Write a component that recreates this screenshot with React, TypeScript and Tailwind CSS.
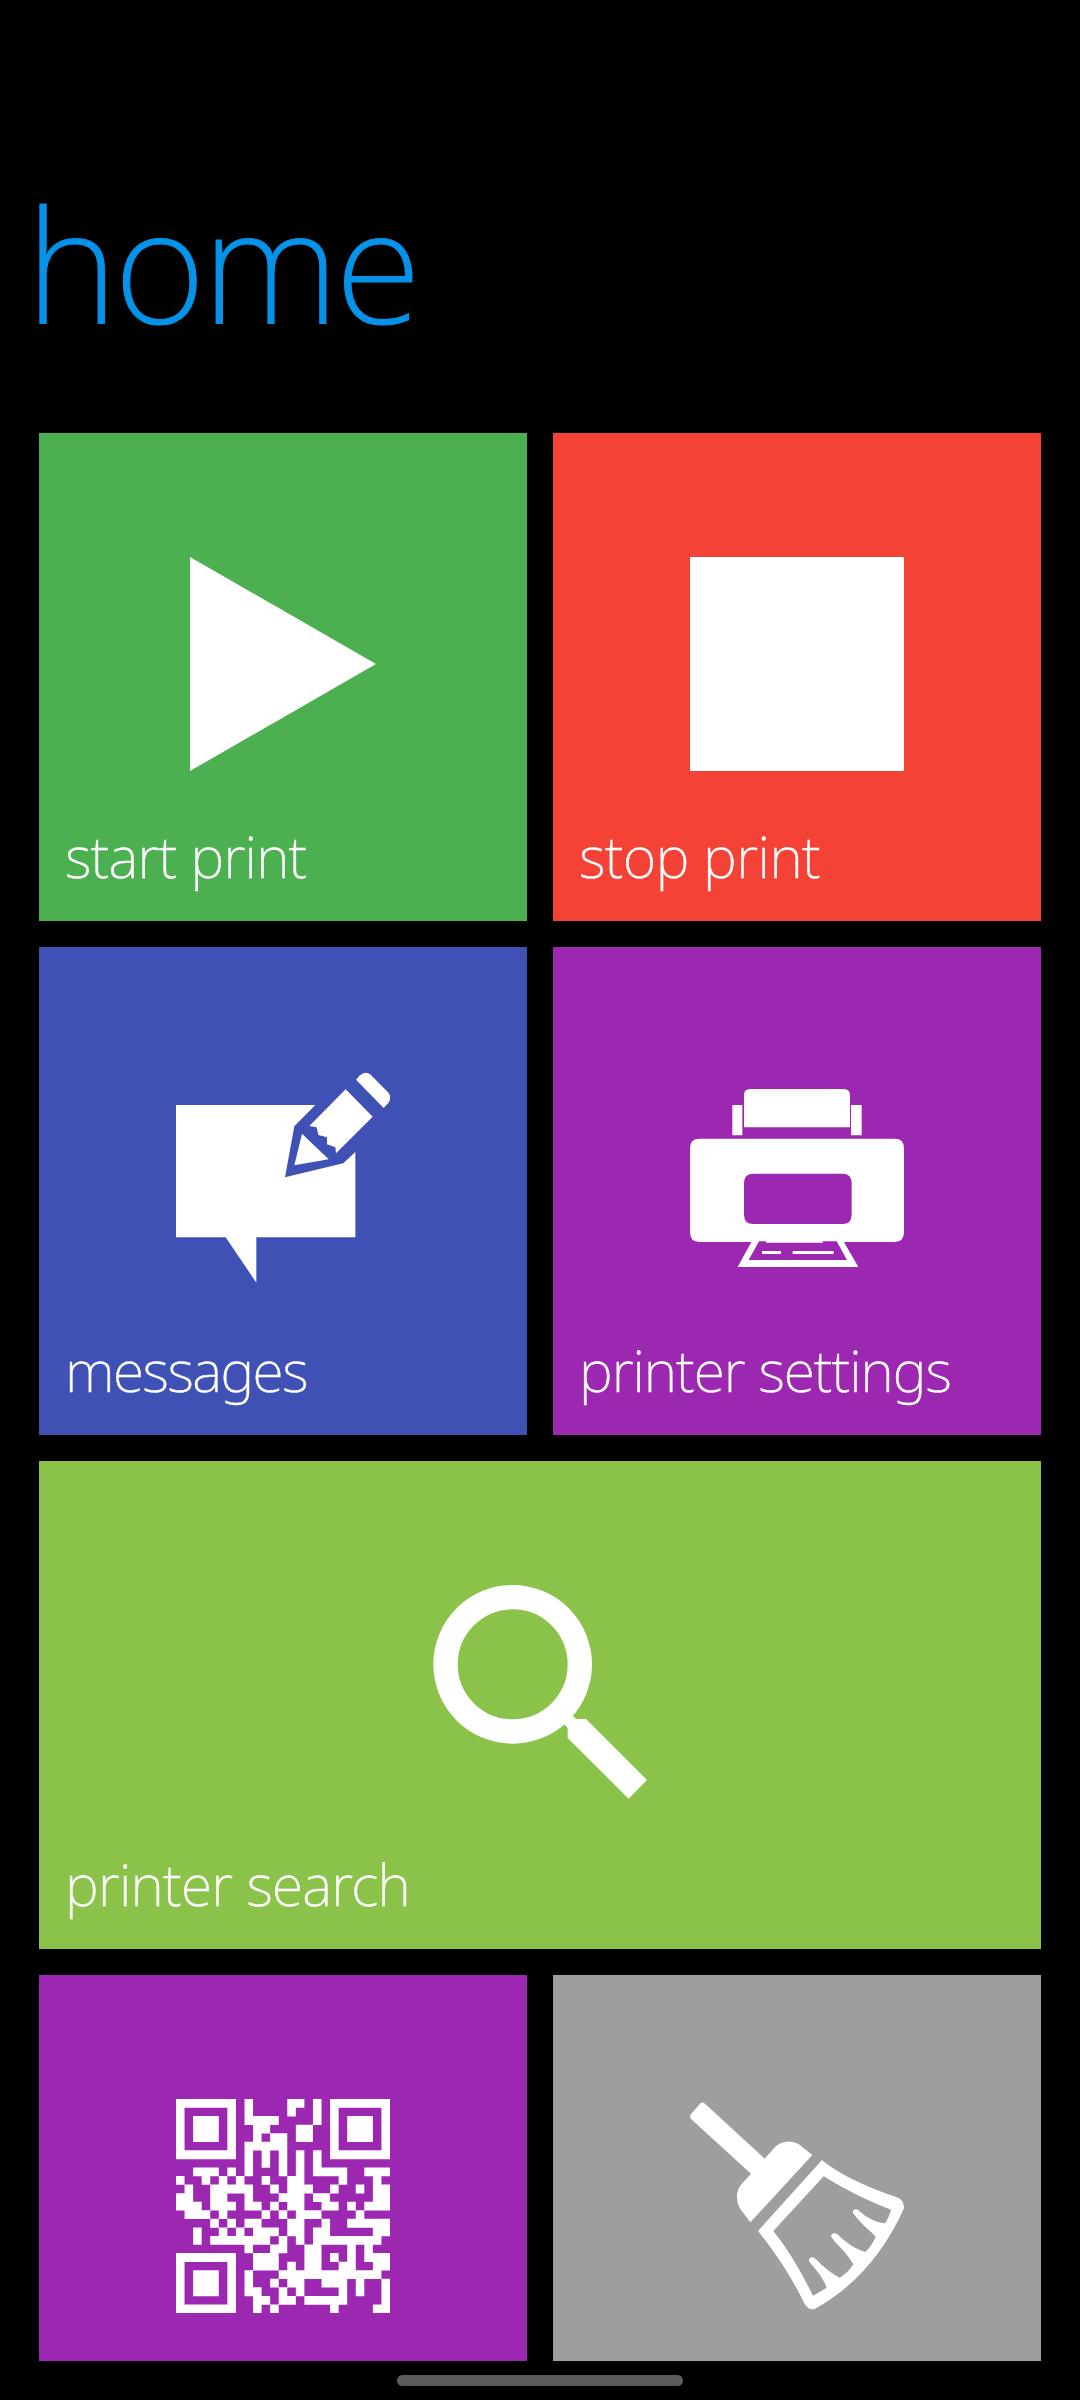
import type { ReactNode } from "react";

function PlayIcon() {
  return (
    <svg className="size-[214px] fill-white" viewBox="0 0 214 214">
      <path d="M14 0 200 107 14 214Z" />
    </svg>
  );
}

function StopIcon() {
  return <div className="size-[214px] bg-white" />;
}

function MessageIcon() {
  return (
    <svg className="size-[214px] fill-white" viewBox="48 63 642 642">
      <path d="M48 165H466L403 229 375 382 550 340 586 306V562H289V698L197 562H48Z" />
      <path d="M426 251 506 328 403 346Z" />
      <path d="M557 118 638 200 528 310 526 292 501 283V262L475 255 470 232 448 228Z" />
      <path d="M588 89 600 76Q616 61 632 74L684 127Q697 142 685 159L671 174Z" />
    </svg>
  );
}

function PrinterIcon() {
  return (
    <svg className="size-[214px] fill-white" viewBox="60 33 642 642">
      <path d="M222 202V106Q222 87 241 87H521Q540 87 540 106V202Z" />
      <path d="M187 135H217V226H187ZM543 135H575V226H543Z" />
      <path
        fillRule="evenodd"
        d="M88 236H674Q702 236 702 264V517Q702 546 674 546H522L565 621H203L244 546H88Q60 546 60 517V264Q60 236 88 236ZM250 341Q222 341 222 369V464Q222 492 250 492H517Q545 492 545 464V369Q545 341 517 341ZM267 544 236 600H531L500 544H458V548H288V544Z"
      />
      <path d="M276 573H333V582H276ZM368 573H491V582H368Z" />
    </svg>
  );
}

function SearchIcon() {
  return (
    <svg className="size-[214px] fill-white" viewBox="99 75 642 642">
      <circle cx="338" cy="313" r="201.5" fill="none" stroke="white" strokeWidth="73" />
      <path d="M480 480 508 456 528 477H558L741 660 686 716 503 534V504Z" />
    </svg>
  );
}

function BroomIcon() {
  return (
    <svg className="size-[214px] fill-white" viewBox="60 57 642 642">
      <path d="M64 101 90 71Q97 64 105 71L284 236 313 203Q332 183 362 185 380 186 393 198L427 225 241 427 218 396Q201 377 201 350 200 330 215 312L243 281 64 118Q57 110 64 101Z" />
      <path
        fillRule="evenodd"
        d="M456 240Q525 299 686 354 Q702 362 702 385 Q610 590 434 687 Q416 691 404 672 Q350 560 264 453ZM461 289 310 453Q370 527 429 647L470 623C455 585 434 566 417 544 416 532 426 529 435 535 460 562 485 581 509 593Q535 578 550 553C530 516 500 496 483 469 484 459 493 457 502 463 530 490 557 508 586 516Q605 498 617 470C595 447 570 430 548 397 549 387 558 386 566 391 590 414 617 427 645 430Q655 416 663 389 560 351 461 289Z"
      />
    </svg>
  );
}

const qrRows = [
  "1111111010000110101111111",
  "1000001010000100101000001",
  "1011101011110000101011101",
  "1011101001100011001011101",
  "1011101001011011001011101",
  "1000001011111000001000001",
  "1111111010101010101111111",
  "0000000010101010100000000",
  "0011101010001010111100111",
  "1001010100100110000100010",
  "0100111110010111001001011",
  "1100110010001110110000011",
  "1110111011010110011010111",
  "0111010000101011100001000",
  "0000101011000110010011111",
  "0010010101110110110000011",
  "0010111111101010111111110",
  "0000000010011001100010100",
  "1111111001110001101010111",
  "1000001001110101100110011",
  "1011101010001111111111110",
  "1011101010010110011101001",
  "1011101011001010000101001",
  "1000001001101101111100001",
  "1111111001010000001000011",
];

const qrPath = qrRows
  .flatMap((row, y) =>
    [...row.matchAll(/1+/g)].map((run) => `M${run.index} ${y}h${run[0].length}v1.03h-${run[0].length}z`),
  )
  .join("");

function QrIcon() {
  return (
    <svg className="size-[214px] fill-white" viewBox="0 0 25 25">
      <path d={qrPath} />
    </svg>
  );
}

interface TileProps {
  className: string;
  label?: string;
  children: ReactNode;
}

function Tile({ className, label, children }: TileProps) {
  return (
    <button className={`flex h-[488px] flex-col items-center justify-between pt-[124px] pb-9 ${className}`}>
      {children}
      <span className="self-start pl-[26px] text-[57px] leading-none whitespace-nowrap [-webkit-text-stroke:0.4px_white]">
        {label}
      </span>
    </button>
  );
}

export default function App() {
  return (
    <div className="flex h-[2400px] w-[1080px] flex-col overflow-hidden bg-black font-['Noto_Sans',sans-serif] font-extralight text-white">
      <h1 className="h-[433px] shrink-0 pt-[184px] pl-[26px] text-[157px] leading-none font-extralight tracking-[-3.2px] text-[#0593e9] [-webkit-text-stroke:1.2px_#0593e9]">
        home
      </h1>
      <main className="grid h-[1928px] shrink-0 auto-rows-max grid-cols-2 gap-[26px] overflow-hidden px-[39px]">
        <Tile className="bg-[#4caf50] tracking-[-0.75px]" label="start print"><PlayIcon /></Tile>
        <Tile className="bg-[#f44336] tracking-[-0.5px]" label="stop print"><StopIcon /></Tile>
        <Tile className="bg-[#3f51b5] tracking-[-1.5px]" label="messages"><MessageIcon /></Tile>
        <Tile className="bg-[#9c27b0] tracking-[-1px]" label="printer settings"><PrinterIcon /></Tile>
        <Tile className="col-span-2 bg-[#8bc34a] tracking-[-0.75px]" label="printer search"><SearchIcon /></Tile>
        <Tile className="bg-[#9c27b0]"><QrIcon /></Tile>
        <Tile className="bg-[#9e9e9e]"><BroomIcon /></Tile>
      </main>
      <div className="mt-[14px] h-[11px] w-[286px] shrink-0 self-center rounded-full bg-[#5c5c5c]" />
    </div>
  );
}
